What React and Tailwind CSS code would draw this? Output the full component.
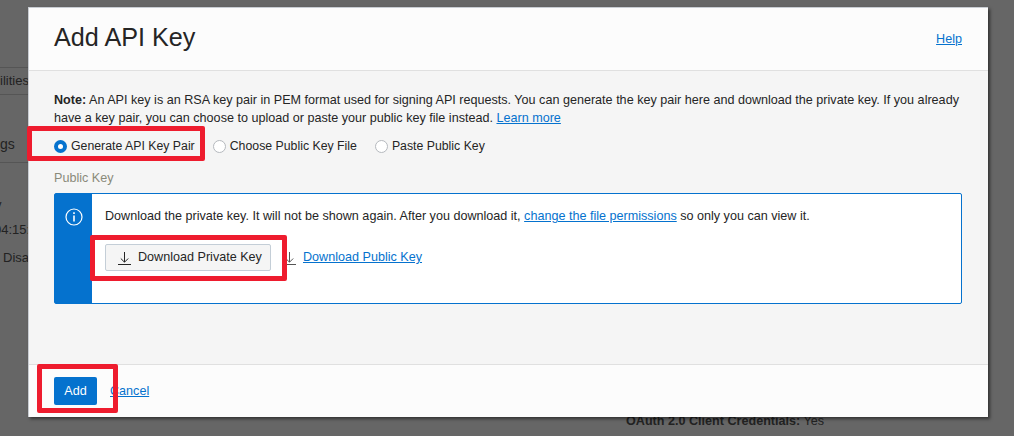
function DownloadIcon({ className }) {
  return (
    <svg viewBox="0 0 13 14" width="13" height="14" fill="none" stroke="currentColor" strokeWidth="1" className={className}>
      <path d="M6.5 1v10M2.8 7.5l3.7 3.7 3.7-3.7M0 13.5h13" />
    </svg>
  );
}

function Radio({ checked, label }) {
  return (
    <label className="flex items-center gap-[4px] text-[12.3px]">
      {checked ? (
        <span className="w-[13px] h-[13px] rounded-full bg-[#0572ce] flex items-center justify-center">
          <span className="w-[5px] h-[5px] rounded-full bg-white" />
        </span>
      ) : (
        <span className="w-[13px] h-[13px] rounded-full border border-[#b5b9be] bg-white" />
      )}
      <span>{label}</span>
    </label>
  );
}

export default function App() {
  return (
    <div className="relative w-[1014px] h-[436px] overflow-hidden bg-[#666666] pt-[7px] pl-[28px] text-[12.6px] text-[#252525] [font-family:'Liberation_Sans',Arial,sans-serif]">
      {/* page behind the dialog */}
      <div className="absolute left-0 top-[67px] w-[28px] h-[28px] border-y border-[#555555] text-[#222222] text-[13px] leading-[26px] text-right">ilities</div>
      <div className="absolute left-0 top-[94px] w-[28px] h-[69px] border-b border-[#555555] text-[#222222] text-[14px] leading-[100px]">gs</div>
      <div className="absolute left-[-5px] top-[195px] text-[#222222] text-[13px]">y</div>
      <div className="absolute left-[-6px] top-[220px] text-[#222222] text-[13px]">04:15:</div>
      <div className="absolute left-[3px] top-[248px] text-[#222222] text-[13px]">Disa</div>
      <div className="absolute left-[626px] top-[412px] text-[#222222] text-[12.6px]">
        <b>OAuth 2.0 Client Credentials:</b> Yes
      </div>

      <div className="relative flex flex-col w-[960px] h-[410px] bg-[#f5f5f5] border-t border-l border-[#c8ccd2] shadow-[2px_2px_3px_rgba(0,0,0,0.5)]">
        <header className="h-[63px] shrink-0 bg-[#fcfcfc] border-b border-[#e0e0e0] flex items-center justify-between pl-[25px] pr-[26px]">
          <h1 className="text-[25.2px] text-[#252525] mt-[-2px]">Add API Key</h1>
          <a className="text-[#0572ce] underline">Help</a>
        </header>

        <div className="flex-1 pt-[20px] pl-[25px] pr-[26px]">
          <p className="leading-[18px]">
            <b>Note:</b> An API key is an RSA key pair in PEM format used for signing API requests. You can generate the key pair here and download the private key. If you already
            <br />
            have a key pair, you can choose to upload or paste your public key file instead.{" "}
            <a className="text-[#0572ce] underline">Learn more</a>
          </p>
          <div className="flex gap-[18px] mt-[9px] h-[20px] items-center">
            <Radio checked label="Generate API Key Pair" />
            <Radio label="Choose Public Key File" />
            <Radio label="Paste Public Key" />
          </div>
          <div className="mt-[15px] text-[#8a8a7a] leading-[14px]">Public Key</div>
          <div className="mt-[8px] h-[111px] flex border border-[#0572ce] rounded-[2px] bg-white">
            <div className="w-[37px] shrink-0 bg-[#0572ce] flex justify-center pt-[14px]">
              <svg viewBox="0 0 18 18" width="18" height="18" fill="none" stroke="white">
                <circle cx="9" cy="9" r="8" strokeWidth="1.2" />
                <path d="M9 7.5v6" strokeWidth="1.6" />
                <path d="M9 4.2v1.8" strokeWidth="1.6" />
              </svg>
            </div>
            <div className="pl-[13px] pt-[14px]">
              <p className="leading-[16px]">
                Download the private key. It will not be shown again. After you download it,{" "}
                <a className="text-[#0572ce] underline">change the file permissions</a> so only you can view it.
              </p>
              <div className="flex items-center mt-[20px]">
                <button className="flex items-center gap-[7px] h-[27px] w-[166px] pl-[12px] border border-[#c4ced7] rounded-[2px] bg-[#f5f5f5] text-[#252525]">
                  <DownloadIcon />
                  Download Private Key
                </button>
                <DownloadIcon className="ml-[12px] text-[#555555]" />
                <a className="ml-[7px] text-[#0572ce] underline">Download Public Key</a>
              </div>
            </div>
          </div>
        </div>

        <footer className="h-[53px] shrink-0 bg-[#fcfcfc] border-t border-[#e0e0e0] flex items-center pl-[25px] gap-[13px]">
          <button className="w-[43px] h-[28px] rounded-[2px] bg-[#0572ce] text-white">Add</button>
          <a className="text-[#0572ce] underline">Cancel</a>
        </footer>
      </div>

      {/* red annotation boxes */}
      <div className="absolute left-[27px] top-[126px] w-[178px] h-[35px] border-[5px] border-[#ee1c2e] rounded-[2px]" />
      <div className="absolute left-[90px] top-[235px] w-[197px] h-[46px] border-[5px] border-[#ee1c2e] rounded-[2px]" />
      <div className="absolute left-[37px] top-[364px] w-[81px] h-[49px] border-[5px] border-[#ee1c2e] rounded-[2px]" />
    </div>
  );
}
